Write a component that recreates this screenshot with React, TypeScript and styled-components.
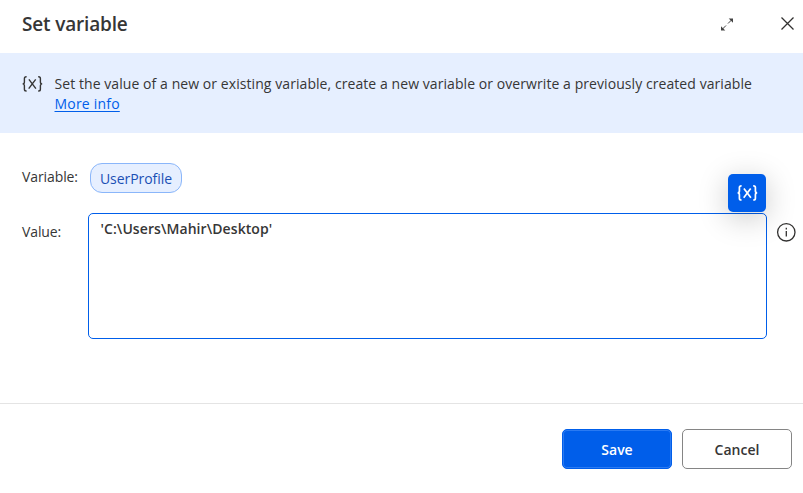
import React from "react";
import styled, { createGlobalStyle } from "styled-components";

const GlobalStyle = createGlobalStyle`
  * { box-sizing: border-box; }
  body {
    margin: 0;
    background: #fff;
    color: #363636;
    font: 14px/20px "Open Sans", "Noto Sans", sans-serif;
    overflow: hidden;
  }
  button { font: inherit; color: inherit; margin: 0; padding: 0; }
`;

const Dialog = styled.div`
  display: flex;
  flex-direction: column;
  width: 803px;
  height: 493px;
`;

const Header = styled.header`
  display: flex;
  align-items: center;
  height: 53px;
  padding: 0 8px 5px 22px;
`;

const Title = styled.h1`
  flex: 1;
  margin: 0;
  font-size: 19px;
  line-height: 26px;
  font-weight: 600;
  letter-spacing: -0.17px;
`;

const IconButton = styled.button<{ $gap?: number }>`
  display: flex;
  border: 0;
  background: none;
  margin: 0 ${(p) => p.$gap ?? 0}px 1px 0;
`;

const Banner = styled.section`
  display: flex;
  height: 80px;
  padding: 21px 22px;
  background: #e6efff;
`;

const BannerIcon = styled.div`
  width: 32.5px;
  display: flex;
`;

const Description = styled.p`
  margin: 0;
  letter-spacing: 0.07px;
  white-space: nowrap;
`;

const MoreInfo = styled.a`
  display: block;
  width: max-content;
  color: #005eea;
  letter-spacing: 0.2px;
  text-decoration: underline;
  text-underline-offset: 2px;
`;

const Body = styled.main`
  height: 270px;
  padding: 30px 7px 0 22px;
`;

const Field = styled.div<{ $top?: number }>`
  display: flex;
  align-items: flex-start;
  margin-top: ${(p) => p.$top ?? 0}px;
`;

const Label = styled.label<{ $width: number; $top: number }>`
  flex: none;
  width: ${(p) => p.$width}px;
  padding-top: ${(p) => p.$top}px;
  letter-spacing: -0.1px;
  white-space: nowrap;
`;

const VariableChip = styled.button`
  width: 92px;
  height: 30px;
  padding-top: 2px;
  border: 1px solid #8ab6fa;
  border-radius: 12px;
  background: #e6efff;
  color: #1b4fb5;
  letter-spacing: -0.05px;
`;

const ValueBox = styled.div`
  position: relative;
  width: 679px;
  height: 126px;
  padding: 5px 11.5px;
  border: 1px solid #005eea;
  border-radius: 5px;
  font-weight: 600;
  letter-spacing: 0.08px;
`;

const InsertVariable = styled.button`
  position: absolute;
  right: 0;
  bottom: calc(100% + 2px);
  display: flex;
  align-items: center;
  justify-content: center;
  width: 38px;
  height: 38px;
  border: 0;
  border-radius: 5px;
  background: #005eea;
  color: #fff;
  box-shadow: 0 6px 30px rgba(0, 0, 0, 0.22);
`;

const InfoIcon = styled.div`
  display: flex;
  margin: 9px 0 0 9px;
`;

const Footer = styled.footer`
  display: flex;
  justify-content: flex-end;
  gap: 10px;
  height: 90px;
  padding: 25px 11px 0 0;
  border-top: 1px solid #e4e4e4;
`;

const ActionButton = styled.button<{ $primary?: boolean }>`
  width: 110px;
  height: 40px;
  padding-top: 2px;
  border: 1px solid ${(p) => (p.$primary ? "#005eea" : "#858585")};
  border-radius: 5px;
  background: ${(p) => (p.$primary ? "#005eea" : "#fff")};
  color: ${(p) => (p.$primary ? "#fff" : "#363636")};
  box-shadow: ${(p) => (p.$primary ? "inset 0 0 0 1px #2a7af2" : "none")};
  font-weight: 600;
`;

const VariableIcon = ({ weight = 1.4 }: { weight?: number }) => (
  <svg width="21" height="20" viewBox="0 0 21 20" fill="none" stroke="currentColor" strokeWidth={weight}>
    <path d="M4.6 2.8H4.2Q2.4 2.8 2.4 4.6V8Q2.4 9.9 .6 9.9Q2.4 9.9 2.4 11.8V15.2Q2.4 17 4.2 17H4.6" />
    <path d="M16.2 2.8H16.6Q18.4 2.8 18.4 4.6V8Q18.4 9.9 20.2 9.9Q18.4 9.9 18.4 11.8V15.2Q18.4 17 16.6 17H16.2" />
    <path d="M6.9 5.4L13.9 14.7M13.7 5.4L6.7 14.7" />
  </svg>
);

export default function App() {
  return (
    <Dialog>
      <GlobalStyle />
      <Header>
        <Title>Set variable</Title>
        <IconButton $gap={46} aria-label="Expand">
          <svg width="14" height="14" viewBox="0 0 14 14" stroke="#444" strokeWidth="1">
            <path d="M12 2.5L8 6.5M2 12.5L6 8.5" />
            <path d="M8.7 1.5H13V5.8zM1 9.2V13.5H5.3z" fill="#444" stroke="none" />
          </svg>
        </IconButton>
        <IconButton aria-label="Close">
          <svg width="15" height="15" viewBox="0 0 15 15" fill="none" stroke="#323130" strokeWidth="1.3">
            <path d="M1.5 1.5l12 12M13.5 1.5l-12 12" />
          </svg>
        </IconButton>
      </Header>
      <Banner>
        <BannerIcon>
          <VariableIcon />
        </BannerIcon>
        <Description>
          Set the value of a new or existing variable, create a new variable or overwrite a previously created variable
          <MoreInfo>More info</MoreInfo>
        </Description>
      </Banner>
      <Body>
        <Field>
          <Label $width={68} $top={4}>Variable:</Label>
          <VariableChip>UserProfile</VariableChip>
        </Field>
        <Field $top={20}>
          <Label $width={66} $top={9}>Value:</Label>
          <ValueBox>
            'C:\Users\Mahir\Desktop'
            <InsertVariable aria-label="Insert variable">
              <VariableIcon weight={1.7} />
            </InsertVariable>
          </ValueBox>
          <InfoIcon>
            <svg width="20" height="20" viewBox="0 0 20 20" fill="none" stroke="#323130" strokeWidth="1.3">
              <circle cx="10.3" cy="10.3" r="8.7" />
              <path d="M10.3 9v5.5M10.3 5.8v1.6" />
            </svg>
          </InfoIcon>
        </Field>
      </Body>
      <Footer>
        <ActionButton $primary>Save</ActionButton>
        <ActionButton>Cancel</ActionButton>
      </Footer>
    </Dialog>
  );
}
